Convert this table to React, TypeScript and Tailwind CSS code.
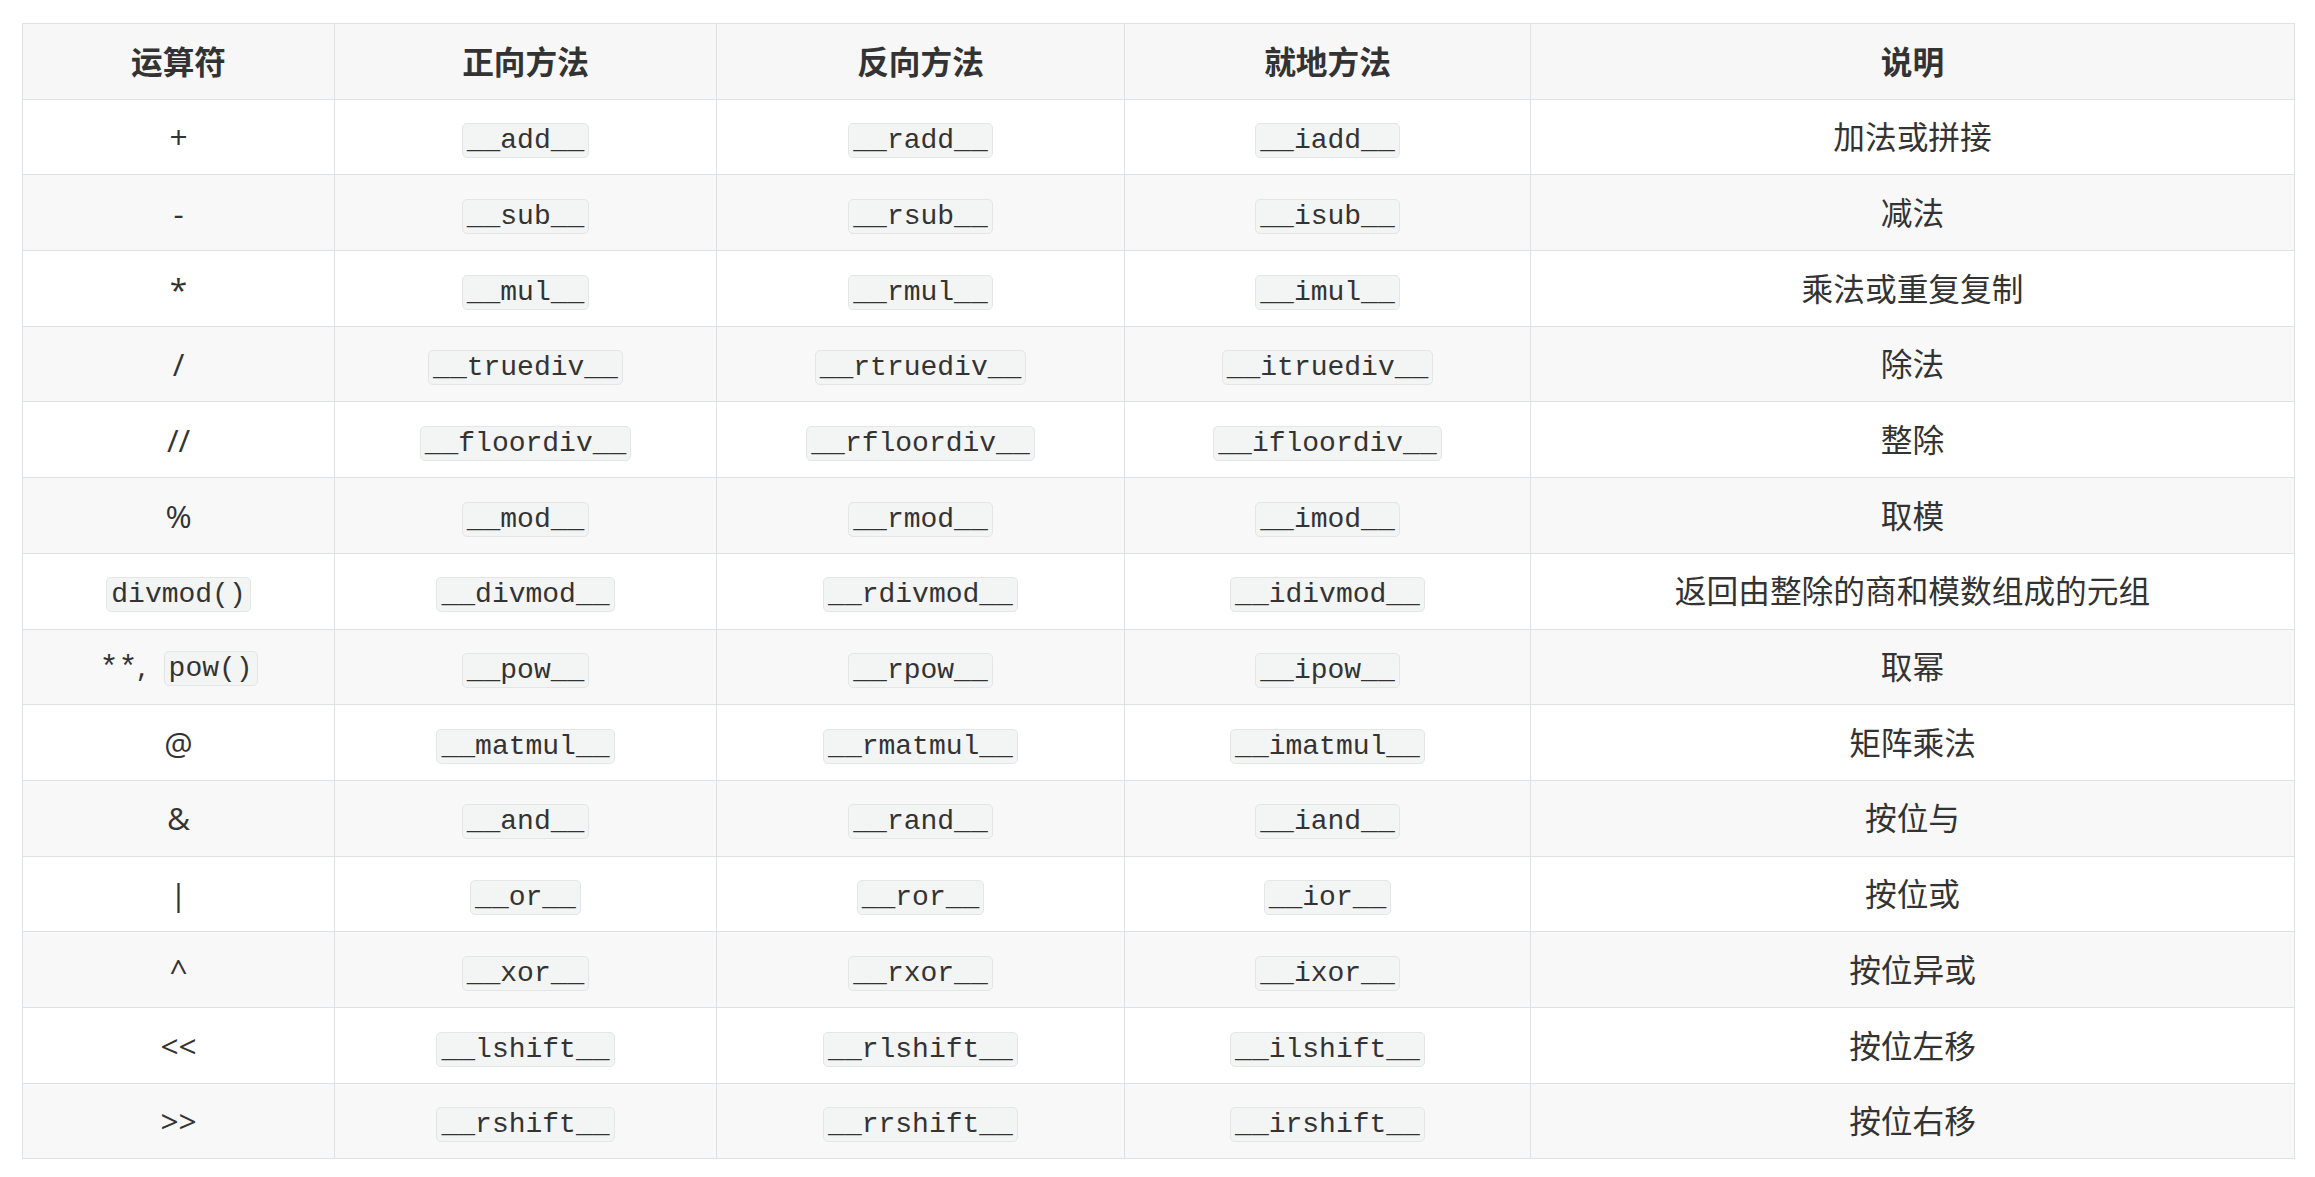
import { FC, ReactNode } from "react";

type Row = {
    op: ReactNode;
    fwd: string;
    rev: string;
    inplace: string;
    desc: string;
};

const Code: FC<{ children: ReactNode }> = ({ children }) => (
    <code className="inline-block rounded-[5px] border border-[#e3e5e7] bg-[#f3f4f4] px-[4px] align-middle font-['Liberation_Mono',monospace] text-[28px] leading-[33px] text-[#333]">
        {children}
    </code>
);

const rows: Row[] = [
    { op: "+", fwd: "__add__", rev: "__radd__", inplace: "__iadd__", desc: "加法或拼接" },
    { op: "-", fwd: "__sub__", rev: "__rsub__", inplace: "__isub__", desc: "减法" },
    { op: "*", fwd: "__mul__", rev: "__rmul__", inplace: "__imul__", desc: "乘法或重复复制" },
    { op: "/", fwd: "__truediv__", rev: "__rtruediv__", inplace: "__itruediv__", desc: "除法" },
    { op: "//", fwd: "__floordiv__", rev: "__rfloordiv__", inplace: "__ifloordiv__", desc: "整除" },
    { op: "%", fwd: "__mod__", rev: "__rmod__", inplace: "__imod__", desc: "取模" },
    { op: <Code>divmod()</Code>, fwd: "__divmod__", rev: "__rdivmod__", inplace: "__idivmod__", desc: "返回由整除的商和模数组成的元组" },
    {
        op: (
            <>
                <span className="font-['Liberation_Mono',monospace]">**</span>,<span className="ml-[18px]"><Code>pow()</Code></span>
            </>
        ),
        fwd: "__pow__",
        rev: "__rpow__",
        inplace: "__ipow__",
        desc: "取幂",
    },
    { op: "@", fwd: "__matmul__", rev: "__rmatmul__", inplace: "__imatmul__", desc: "矩阵乘法" },
    { op: "&", fwd: "__and__", rev: "__rand__", inplace: "__iand__", desc: "按位与" },
    { op: "|", fwd: "__or__", rev: "__ror__", inplace: "__ior__", desc: "按位或" },
    { op: "^", fwd: "__xor__", rev: "__rxor__", inplace: "__ixor__", desc: "按位异或" },
    { op: "<<", fwd: "__lshift__", rev: "__rlshift__", inplace: "__ilshift__", desc: "按位左移" },
    { op: ">>", fwd: "__rshift__", rev: "__rrshift__", inplace: "__irshift__", desc: "按位右移" },
];

const cell = "border border-[#dfe2e5] p-0 text-center align-middle";

export default function App() {
    return (
        <div className="min-h-screen bg-white pl-[22px] pt-[23px] font-['Open_Sans','Noto_Sans_CJK_SC',sans-serif] text-[31.7px] text-[#333]">
            <table className="w-[2272px] table-fixed border-collapse">
                <colgroup>
                    <col className="w-[312px]" />
                    <col className="w-[382px]" />
                    <col className="w-[408px]" />
                    <col className="w-[406px]" />
                    <col className="w-[764px]" />
                </colgroup>
                <thead>
                    <tr className="h-[75.7px] bg-[#f7f7f7]">
                        <th className={cell + " font-semibold"}>运算符</th>
                        <th className={cell + " font-semibold"}>正向方法</th>
                        <th className={cell + " font-semibold"}>反向方法</th>
                        <th className={cell + " font-semibold"}>就地方法</th>
                        <th className={cell + " font-semibold"}>说明</th>
                    </tr>
                </thead>
                <tbody>
                    {rows.map((r, i) => (
                        <tr key={i} className={"h-[75.7px] " + (i % 2 === 1 ? "bg-[#f8f8f8]" : "bg-white")}>
                            <td className={cell}>{r.op}</td>
                            <td className={cell}><Code>{r.fwd}</Code></td>
                            <td className={cell}><Code>{r.rev}</Code></td>
                            <td className={cell}><Code>{r.inplace}</Code></td>
                            <td className={cell}>{r.desc}</td>
                        </tr>
                    ))}
                </tbody>
            </table>
        </div>
    );
}
